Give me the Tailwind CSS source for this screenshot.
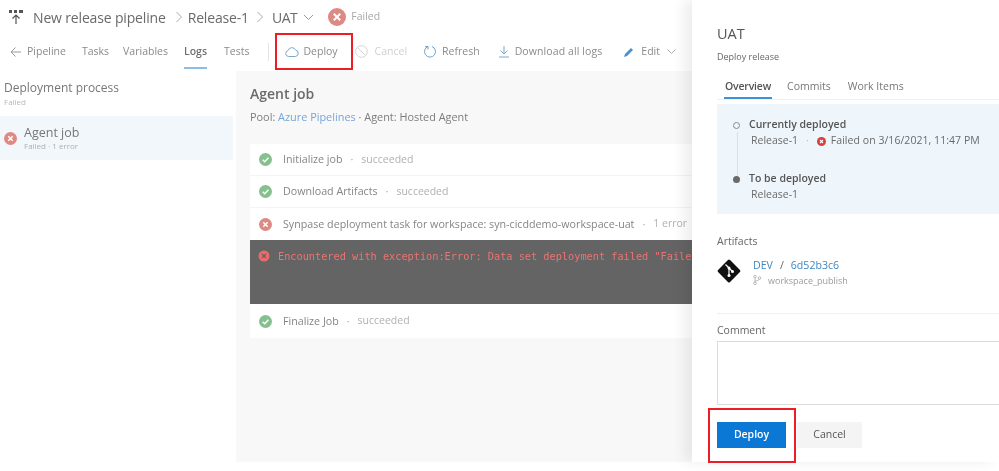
<!DOCTYPE html>
<html>
<head>
<meta charset="utf-8">
<script src="https://cdn.jsdelivr.net/npm/@tailwindcss/browser@4"></script>
</head>
<body class="m-0 bg-white overflow-hidden">
<div class="relative w-[999px] h-[471px] overflow-hidden bg-white font-['Open_Sans',sans-serif] blur-[0.35px]">
  <div class="h-[462px] flex flex-col">
    <!-- header -->
    <header class="h-[71px] flex flex-col shrink-0">
      <div class="h-[34px] flex items-center pl-[9px] whitespace-nowrap">
        <svg width="15" height="18" viewBox="0 0 15 18"><rect x="0" y="2" width="3" height="3" fill="#555"/><rect x="5" y="2" width="3" height="3" fill="#555"/><rect x="10" y="2" width="4" height="3" fill="#555"/><path d="M7 16V7M3.500 10.500 7 7l3.500 3.500" fill="none" stroke="#555" stroke-width="1.200"/></svg>
        <span class="ml-[9px] text-[14px] tracking-[-0.16px] text-[#6a6a6a]">New release pipeline</span>
        <svg width="6" height="12" viewBox="0 0 6 12" class="ml-[10px]"><path d="M.5 1l5 5-5 5" fill="none" stroke="#aaa"/></svg>
        <span class="ml-[6px] text-[14px] tracking-[-0.16px] text-[#6a6a6a]">Release-1</span>
        <svg width="6" height="12" viewBox="0 0 6 12" class="ml-[8px]"><path d="M.5 1l5 5-5 5" fill="none" stroke="#aaa"/></svg>
        <span class="ml-[9px] text-[14px] tracking-[-0.5px] text-[#6a6a6a]">UAT</span>
        <svg width="11" height="7" viewBox="0 0 11 7" class="ml-[6px]"><path d="M1 1l4.500 4.500L10 1" fill="none" stroke="#999"/></svg>
        <svg width="18" height="18" viewBox="0 0 18 18" class="ml-[14px]"><circle cx="9" cy="9" r="9" fill="#de8a84"/><path d="M5.800 5.800l6.400 6.400m0-6.400l-6.400 6.400" stroke="#fff" stroke-width="2"/></svg>
        <span class="ml-[5px] text-[10.500px] text-[#a8a8a8]">Failed</span>
      </div>
      <nav class="h-[35px] flex items-center text-[10.5px] text-[#8a8a8a] whitespace-nowrap">
        <svg width="12" height="12" viewBox="0 0 12 12" class="ml-[10px]"><path d="M11 6H1M5.500 1.500 1 6l4.500 4.500" fill="none" stroke="#999"/></svg>
        <span class="ml-[5px]">Pipeline</span>
        <span class="ml-[16px]">Tasks</span>
        <span class="ml-[14px]">Variables</span>
        <span class="ml-[16px] h-full flex items-center relative font-semibold text-[#6f6f6f]">Logs<span class="absolute left-0 right-0 bottom-0 h-[2px] bg-[#8bbde6]"></span></span>
        <span class="ml-[17px]">Tests</span>
        <span class="ml-[19px] w-px h-[18px] bg-[#e4e4e4]"></span>
        <svg width="14" height="10" viewBox="0 0 14 10" class="ml-[16px]"><path d="M3.500 9.500a3 3 0 0 1-.5-5.900 4 4 0 0 1 7.500-.6 3.300 3.300 0 0 1 0 6.500z" fill="none" stroke="#7ba7cc"/></svg>
        <span class="ml-[4px]">Deploy</span>
        <svg width="13" height="13" viewBox="0 0 13 13" class="ml-[17px]"><circle cx="6.500" cy="6.500" r="5.800" fill="none" stroke="#d4d4d4"/><path d="M2.500 2.500l8 8" stroke="#d4d4d4"/></svg>
        <span class="ml-[7px] text-[#d0d0d0]">Cancel</span>
        <svg width="13" height="13" viewBox="0 0 13 13" class="ml-[17px]"><path d="M4 1.500a5.500 5.500 0 1 0 4 0M4 1.500V4.500M4 1.500H1.200" fill="none" stroke="#6fa3d3"/></svg>
        <span class="ml-[5px]">Refresh</span>
        <svg width="10" height="13" viewBox="0 0 10 13" class="ml-[19px]"><path d="M5 1v8M1.500 5.500 5 9l3.500-3.500M0 12h10" fill="none" stroke="#7ba7cc"/></svg>
        <span class="ml-[6px] tracking-[0.1px]">Download all logs</span>
        <svg width="12" height="12" viewBox="0 0 12 12" class="ml-[21px]"><path d="M1 11l1-3 6-6 2 2-6 6z" fill="#4d90d0"/></svg>
        <span class="ml-[6px]">Edit</span>
        <svg width="9" height="6" viewBox="0 0 9 6" class="ml-[7px]"><path d="M.5.5l4 4 4-4" fill="none" stroke="#aaa"/></svg>
      </nav>
    </header>
    <div class="flex-1 flex min-h-0">
      <!-- sidebar -->
      <aside class="w-[236px] shrink-0">
        <div class="h-[45px] pl-[4px] pt-[8px]">
          <div class="text-[12px] leading-[18px] text-[#777]">Deployment process</div>
          <div class="text-[8px] leading-[9px] text-[#b8b8b8]">Failed</div>
        </div>
        <div class="h-[44px] w-[233px] bg-[#f1f7fb] flex items-center pl-[4px]">
          <svg width="13" height="13" viewBox="0 0 13 13"><circle cx="6.500" cy="6.500" r="6.500" fill="#de8a84"/><path d="M4.300 4.300l4.400 4.400m0-4.400l-4.400 4.400" stroke="#fff" stroke-width="1.500"/></svg>
          <div class="ml-[7px] -mt-[1px]">
            <div class="text-[12.5px] leading-[17px] text-[#777]">Agent job</div>
            <div class="text-[8px] leading-[10px] text-[#b0b0b0]">Failed · 1 error</div>
          </div>
        </div>
      </aside>
      <!-- main -->
      <main class="flex-1 bg-[#f8f8f8] pl-[14px] pt-[13px] min-w-0">
        <div class="text-[14px] leading-[20px] font-semibold text-[#6b6b6b]">Agent job</div>
        <div class="mt-[6px] text-[10.900px] leading-[14px] text-[#7c7c7c] whitespace-nowrap">Pool: <span class="text-[#75a5d8]">Azure Pipelines</span> · Agent: Hosted Agent</div>
        <div class="mt-[20px] w-[442px] bg-white">
          <div class="h-[32px] flex items-center pl-[9px] text-[10.700px] text-[#858585] border-b border-[#f4f4f4]">
            <svg width="13" height="13" viewBox="0 0 13 13"><circle cx="6.500" cy="6.500" r="6.500" fill="#85c08f"/><path d="M3.700 6.700l2 2 3.700-3.900" fill="none" stroke="#fff" stroke-width="1.500"/></svg>
            <span class="ml-[11px]">Initialize job</span><span class="ml-[8px] text-[#aaa]">·</span><span class="ml-[8px] text-[10.500px] text-[#b0b0b0]">succeeded</span>
          </div>
          <div class="h-[32px] flex items-center pl-[9px] text-[10.700px] text-[#858585] border-b border-[#f4f4f4]">
            <svg width="13" height="13" viewBox="0 0 13 13"><circle cx="6.500" cy="6.500" r="6.500" fill="#85c08f"/><path d="M3.700 6.700l2 2 3.700-3.900" fill="none" stroke="#fff" stroke-width="1.500"/></svg>
            <span class="ml-[11px]">Download Artifacts</span><span class="ml-[8px] text-[#aaa]">·</span><span class="ml-[8px] text-[10.500px] text-[#b0b0b0]">succeeded</span>
          </div>
          <div class="h-[32px] flex items-center pl-[9px] text-[10.700px] text-[#858585] whitespace-nowrap overflow-hidden">
            <svg width="13" height="13" viewBox="0 0 13 13" class="shrink-0"><circle cx="6.500" cy="6.500" r="6.500" fill="#de8a84"/><path d="M4.300 4.300l4.400 4.400m0-4.400l-4.400 4.400" stroke="#fff" stroke-width="1.500"/></svg>
            <span class="ml-[11px]">Synpase deployment task for workspace: syn-cicddemo-workspace-uat</span><span class="ml-[8px] text-[#aaa]">·</span><span class="ml-[8px] text-[10.500px] text-[#b0b0b0]">1 error</span>
          </div>
          <div class="h-[64px] bg-[#646464] flex items-start pl-[8px] pt-[10px] overflow-hidden whitespace-nowrap">
            <svg width="12" height="12" viewBox="0 0 12 12" class="shrink-0"><circle cx="6" cy="6" r="5.500" fill="#ee6a68"/><path d="M4 4l4 4m0-4l-4 4" stroke="#646464" stroke-width="1.300"/></svg>
            <span class="ml-[8px] font-['DejaVu_Sans_Mono',monospace] text-[10.250px] leading-[13px] text-[#ea7472]">Encountered with exception:Error: Data set deployment failed "Failed</span>
          </div>
          <div class="h-[34px] flex items-center pl-[9px] text-[10.700px] text-[#858585]">
            <svg width="13" height="13" viewBox="0 0 13 13"><circle cx="6.500" cy="6.500" r="6.500" fill="#85c08f"/><path d="M3.700 6.700l2 2 3.700-3.900" fill="none" stroke="#fff" stroke-width="1.500"/></svg>
            <span class="ml-[11px]">Finalize Job</span><span class="ml-[8px] text-[#aaa]">·</span><span class="ml-[8px] text-[10.500px] text-[#b0b0b0]">succeeded</span>
          </div>
        </div>
      </main>
    </div>
  </div>

  <!-- side panel -->
  <section class="absolute left-[692px] top-0 w-[307px] h-[462px] bg-white shadow-[-8px_0_12px_rgba(0,0,0,0.07)] pl-[25px]">
    <h1 class="mt-[24px] text-[14.500px] leading-[20px] font-normal text-[#555]">UAT</h1>
    <p class="mt-[6px] text-[9px] leading-[14px] text-[#666]">Deploy release</p>
    <div class="mt-[13px] h-[23px] flex items-start border-b border-[#f0f0f0] text-[10.500px] text-[#777] whitespace-nowrap">
      <span class="relative ml-[8px] h-[22px] leading-[16px] pt-[1px] text-[#555] font-semibold tracking-[-0.2px]">Overview<span class="absolute -left-[1px] -right-[1px] bottom-0 h-[2px] bg-[#3d92d8]"></span></span>
      <span class="ml-[16px] leading-[16px] pt-[1px]">Commits</span>
      <span class="ml-[17px] leading-[16px] pt-[1px]">Work Items</span>
    </div>
    <div class="mt-[4px] h-[110px] bg-[#eef5fb] pl-[16px] pt-[13px] relative text-[10.500px] whitespace-nowrap">
      <span class="absolute left-[19.500px] top-[28px] h-[44px] w-px bg-[#dadfe3]"></span>
      <div class="flex items-center h-[16px] font-semibold text-[#555]"><span class="relative w-[7px] h-[7px] rounded-full bg-[#eef5fb] border border-[#8a8a8a]"></span><span class="ml-[9px]">Currently deployed</span></div>
      <div class="flex items-center h-[16px] ml-[18px] text-[#6a6a6a]">Release-1<span class="ml-[8px] text-[#bbb]">·</span><svg width="9" height="9" viewBox="0 0 9 9" class="ml-[8px]"><circle cx="4.500" cy="4.500" r="4.500" fill="#d8403c"/><path d="M3 3l3 3m0-3l-3 3" stroke="#fff" stroke-width="1.100"/></svg><span class="ml-[5px] tracking-[0.05px]">Failed on 3/16/2021, 11:47 PM</span></div>
      <div class="mt-[22px] flex items-center h-[16px] font-semibold text-[#555]"><span class="relative w-[7px] h-[7px] rounded-full bg-[#6a6a6a]"></span><span class="ml-[9px]">To be deployed</span></div>
      <div class="flex items-center h-[15px] ml-[18px] text-[#6a6a6a]">Release-1</div>
    </div>
    <div class="mt-[20px] text-[10.500px] leading-[14px] text-[#666]">Artifacts</div>
    <div class="mt-[7px] flex items-center h-[34px]">
      <svg width="26" height="26" viewBox="0 0 26 26" class="-ml-[1px] mb-[2px]"><rect x="4.500" y="4.500" width="17" height="17" rx="1.500" transform="rotate(45 13 13)" fill="#111"/><path d="M9.500 6.500l7 7M13 10v7" stroke="#fff" stroke-width="1.200"/><circle cx="13" cy="17.500" r="1.500" fill="#fff"/><circle cx="16.500" cy="13.500" r="1.500" fill="#fff"/><circle cx="13" cy="10" r="1.500" fill="#fff"/></svg>
      <div class="ml-[11px]">
        <div class="text-[10.600px] leading-[16px] text-[#3f87c0]">DEV<span class="mx-[7px] text-[#666]">/</span>6d52b3c6</div>
        <div class="flex items-center text-[9px] leading-[15px] text-[#9b9b9b]"><svg width="9" height="10" viewBox="0 0 9 10"><circle cx="2" cy="1.700" r="1.300" fill="none" stroke="#aaa" stroke-width=".8"/><circle cx="2" cy="8.300" r="1.300" fill="none" stroke="#aaa" stroke-width=".8"/><circle cx="6.500" cy="3" r="1.300" fill="none" stroke="#aaa" stroke-width=".8"/><path d="M2 3v4M6.500 4.500 2 6.500" fill="none" stroke="#aaa" stroke-width=".8"/></svg><span class="ml-[6px]">workspace_publish</span></div>
      </div>
    </div>
    <div class="mt-[24px] border-t border-[#f0f0f0] pt-[9px] text-[10.500px] leading-[14px] text-[#666]">Comment</div>
    <div class="mt-[4px] h-[64px] border border-[#dcdcdc] border-r-0"></div>
    <div class="mt-[17px] flex">
      <button class="w-[69px] h-[26px] bg-[#0a78d4] text-white text-[10.500px] font-semibold">Deploy</button>
      <button class="ml-[11px] w-[65px] h-[26px] bg-[#f4f4f4] text-[#555] text-[10.500px]">Cancel</button>
    </div>
  </section>

  <!-- red callout rectangles -->
  <div class="absolute left-[275px] top-[33px] w-[78px] h-[37px] border-[2px] border-[#ee1c25]"></div>
  <div class="absolute left-[708px] top-[408px] w-[88px] h-[55px] border-[2px] border-[#ee1c25]"></div>
</div>
</body>
</html>
